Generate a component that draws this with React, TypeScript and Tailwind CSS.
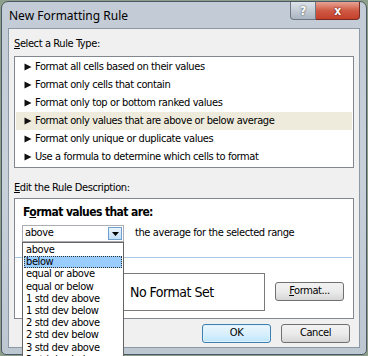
import React from "react";

const font = "font-['DejaVu_Sans_Condensed','Liberation_Sans',sans-serif]";

const ruleTypes = [
  "Format all cells based on their values",
  "Format only cells that contain",
  "Format only top or bottom ranked values",
  "Format only values that are above or below average",
  "Format only unique or duplicate values",
  "Use a formula to determine which cells to format",
];

const options = [
  "above",
  "below",
  "equal or above",
  "equal or below",
  "1 std dev above",
  "1 std dev below",
  "2 std dev above",
  "2 std dev below",
  "3 std dev above",
  "3 std dev below",
];

const Arrow = () => (
  <svg width="8" height="8" viewBox="0 0 8 8" className="shrink-0">
    <path d="M0.5 0.5 L7.5 4 L0.5 7.5 Z" fill="#111" />
  </svg>
);

const App: React.FC = () => {
  return (
    <div
      className={`relative w-[368px] h-[356px] overflow-hidden bg-[#8fa08a] ${font} text-[11px] tracking-[-0.4px] text-black`}
    >
      <div className="flex flex-col w-[366px] h-[354px] ml-[1px] mt-[1px] rounded-t-[7px] rounded-b-[5px] border border-[#4d5866] bg-gradient-to-b from-[#c3ccd6] via-[#c8d1da] to-[#bcc7d2]">
        {/* title bar */}
        <div className="flex h-[26px] items-start">
          <div className="pl-[7px] pt-[5px] text-[12px] tracking-normal font-['Noto_Sans',sans-serif] text-black">
            New Formatting Rule
          </div>
          <div className="ml-auto mr-[6px] flex">
            <div className="flex h-[18px] w-[26px] items-center justify-center rounded-bl-[4px] border border-t-0 border-[#6d7884] bg-gradient-to-b from-[#dde3ea] to-[#aab5c1] text-[12px] font-bold text-white [text-shadow:0_0_2px_#333]">
              ?
            </div>
            <div className="flex h-[18px] w-[44px] items-center justify-center rounded-br-[4px] border border-t-0 border-l-0 border-[#7a2a22] bg-gradient-to-b from-[#e6a293] via-[#cf5a45] to-[#c4402b] text-[12px] font-bold text-white [text-shadow:0_0_2px_#400]">
              x
            </div>
          </div>
        </div>

        {/* client area */}
        <div className="mx-[6px] flex h-[320px] flex-col border border-[#8c98a4] bg-[#f0f0f0] px-[5px]">
          <div className="pt-[8px] leading-[13px]">
            <span className="underline">S</span>elect a Rule Type:
          </div>
          <div className="mt-[6px] border border-[#828790] bg-white p-[1px]">
            {ruleTypes.map((r, i) => (
              <div
                key={r}
                className={`flex h-[18px] items-center gap-[3px] pl-[8px] ${
                  i === 3 ? "bg-[#eeebdc]" : ""
                }`}
              >
                <Arrow />
                <span>{r}</span>
              </div>
            ))}
          </div>

          <div className="mt-[13px] leading-[13px]">
            <span className="underline">E</span>dit the Rule Description:
          </div>
          <div className="relative mt-[4px] flex h-[121px] flex-col border border-[#828790] bg-white pr-[1px]">
            <div className="pl-[8px] pt-[6px] text-[12px] font-bold leading-[14px] tracking-[-0.6px]">
              F<span className="underline">o</span>rmat values that are:
            </div>
            <div className="mt-[6px] flex items-center pl-[7px]">
              <div className="flex h-[17px] w-[102px] shrink-0 items-center border border-[#abadb3] bg-white pl-[2px]">
                <span>above</span>
                <div className="ml-auto mr-[1px] flex h-[13px] w-[14px] items-center justify-center border border-[#6f9fcf] bg-gradient-to-b from-[#eaf4fc] to-[#c4def5]">
                  <svg width="7" height="4" viewBox="0 0 7 4">
                    <path d="M0 0 H7 L3.5 4 Z" fill="#000" />
                  </svg>
                </div>
              </div>
              <span className="ml-[11px]">the average for the selected range</span>
            </div>
            <div className="mt-[15px] h-px bg-[#a9c6e6]" />
            <div className="mt-[15px] flex items-start">
              <div className="ml-[108px] flex h-[38px] w-[142px] shrink-0 items-center border border-l-0 border-[#7a7a7a] pl-[7px] text-[14px] tracking-[-0.5px]">
                No Format Set
              </div>
              <button className="ml-[10px] mt-[9px] h-[19px] w-[69px] shrink-0 rounded-[3px] border border-[#707070] bg-gradient-to-b from-[#f2f2f2] via-[#ebebeb] to-[#d6d6d6] text-[11px]">
                <span className="underline">F</span>ormat...
              </button>
            </div>

            {/* open dropdown list */}
            <div className="absolute left-[7px] top-[43px] z-10 w-[102px] border border-[#646464] bg-white px-[1px] pt-[1px]">
              {options.map((o, i) => (
                <div
                  key={o}
                  className={`h-[12.2px] pl-[2px] leading-[12px] ${
                    i === 1
                      ? "bg-[#99ccff] outline outline-1 outline-dotted -outline-offset-1 outline-[#333]"
                      : ""
                  }`}
                >
                  {o}
                </div>
              ))}
            </div>
          </div>

          <div className="mt-[5px] flex justify-end gap-[10px] pr-[4px]">
            <button className="h-[19px] w-[69px] rounded-[3px] border border-[#3c7fb1] bg-gradient-to-b from-[#eaf6fd] via-[#d9f0fc] to-[#bee6fd] shadow-[inset_0_0_0_1px_#dff2fc]">
              OK
            </button>
            <button className="h-[19px] w-[69px] rounded-[3px] border border-[#707070] bg-gradient-to-b from-[#f2f2f2] via-[#ebebeb] to-[#d6d6d6]">
              Cancel
            </button>
          </div>
        </div>
      </div>
    </div>
  );
};

export default App;
